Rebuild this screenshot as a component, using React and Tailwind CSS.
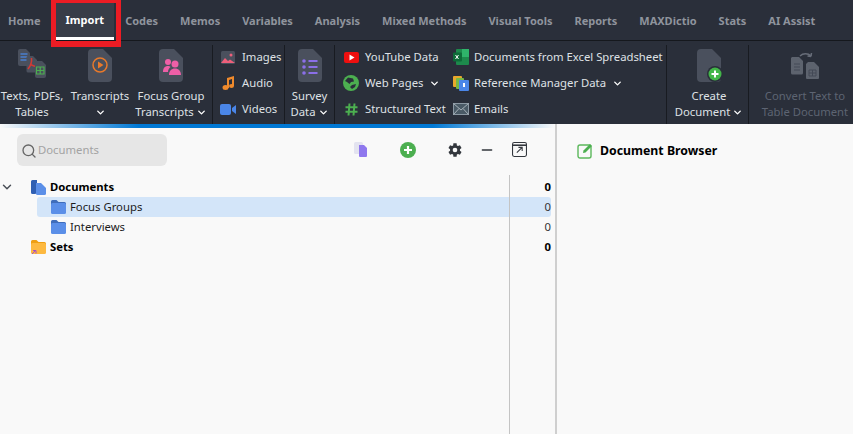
import React from 'react';
import { ChevronDown, Search, Minus } from 'lucide-react';

const tabs = ['Home', 'Import', 'Codes', 'Memos', 'Variables', 'Analysis', 'Mixed Methods', 'Visual Tools', 'Reports', 'MAXDictio', 'Stats', 'AI Assist'];

// Dark page shape used by the big ribbon buttons
const DocShape = ({ children, fill = '#4a505d' }) => (
  <svg width="24" height="33" viewBox="0 0 24 33">
    <path d="M4 0h11l9 9v20a4 4 0 0 1-4 4H4a4 4 0 0 1-4-4V4a4 4 0 0 1 4-4z" fill={fill} />
    {children}
  </svg>
);

const TextsIcon = () => (
  <svg width="28" height="29" viewBox="0 0 28 29">
    <path d="M2 0h6l4 4v11a2 2 0 0 1-2 2H2a2 2 0 0 1-2-2V2a2 2 0 0 1 2-2z" fill="#4a505d" />
    <path d="M2.500 5h7M2.500 8h7M2.500 11h7" stroke="#4a7fd0" strokeWidth="1.300" />
    <path d="M10 7h5l4 4v11a1.500 1.500 0 0 1-1.500 1.500H10A1.500 1.500 0 0 1 8.500 22V8.500A1.500 1.500 0 0 1 10 7z" fill="#4a505d" />
    <path d="M13.500 9c.5 4-1 8-3.500 11M12.500 15.500c2 1 4 2 6 2" stroke="#d23a35" strokeWidth="1.500" fill="none" />
    <path d="M19 12h5l4 4v11a2 2 0 0 1-2 2h-7a2 2 0 0 1-2-2V14a2 2 0 0 1 2-2z" fill="#4a505d" />
    <path d="M18.500 18h7.500v7h-7.500zM18.500 21.500h7.500M22.200 18v7" stroke="#4caf50" strokeWidth="1.200" fill="none" />
  </svg>
);

const BigButton = ({ icon, lines, width, disabled, chevron }) => (
  <div className={`flex flex-col items-center shrink-0 pt-[5px] ${width} ${disabled ? 'text-[#5d6472]' : 'text-[#dfe1e5]'}`}>
    <div className="h-[37px] flex items-start justify-center">{icon}</div>
    <div className="mt-[2px] text-center text-[11.3px] leading-[16px] whitespace-nowrap">
      <div>{lines[0]}</div>
      <div className="flex items-center justify-center h-[16px]">
        {lines[1]}
        {chevron && <ChevronDown size={11} strokeWidth={3} className="ml-[2px] text-white" />}
      </div>
    </div>
  </div>
);

const SmallItem = ({ icon, label, chevron, labelGap = 'w-[20px]' }) => (
  <div className="flex items-center h-[26px] text-[11.3px] text-[#dfe1e5] whitespace-nowrap">
    <div className={`${labelGap} flex items-center justify-center shrink-0`}>{icon}</div>
    <span className="ml-[4px]">{label}</span>
    {chevron && <ChevronDown size={11} strokeWidth={3} className="ml-[6px] text-white" />}
  </div>
);

const Sep = () => <div className="w-px self-stretch mt-[1px] bg-[#181b21] shrink-0" />;

const FolderIcon = ({ color = '#5b8fe8', top = '#3f6dbb' }) => (
  <svg width="15" height="14" viewBox="0 0 15 14">
    <path d="M1.500 0h4l2 2h6A1.500 1.500 0 0 1 15 3.500V6H0V1.500A1.500 1.500 0 0 1 1.500 0z" fill={top} />
    <rect x="0" y="3" width="15" height="11" rx="1.500" fill={color} />
  </svg>
);

const TreeRow = ({ icon, label, count, bold, selected, indent }) => (
  <div className={`flex items-center h-[20px] text-[11.3px] text-[#1c1c1c] ${selected ? 'bg-[#d3e5f9] rounded-[3px]' : ''} ${indent ? 'ml-[37px] pl-[13px]' : 'ml-[30px]'} mr-[4px]`}>
    <div className="w-[16px] flex justify-center shrink-0">{icon}</div>
    <span className={`ml-[4px] flex-1 ${bold ? 'font-bold text-black' : ''}`}>{label}</span>
    <span className={bold ? 'font-bold text-black' : 'text-[#333]'}>{count}</span>
  </div>
);

export default function App() {
  return (
    <div className="w-[853px] h-[434px] overflow-hidden flex flex-col bg-[#f9f9f9] font-['Noto_Sans','Open_Sans',sans-serif]">
      {/* tab bar */}
      <div className="h-[41px] shrink-0 bg-[#2a2f3a] border-b border-[#15181d] flex pt-[3px] text-[11px] font-bold text-[#8f949d]">
        {tabs.map((t) => (
          <div key={t} className={`relative flex items-center whitespace-nowrap ${t === 'Home' ? 'pl-[8px] pr-[15px]' : t === 'Import' ? 'px-[10px] text-white bg-[#383d48] border-b-[3px] border-white' : 'px-[11px]'}`}>
            {t}
            {t === 'Import' && <div className="absolute -left-[5px] -right-[7px] -top-[3px] h-[47px] border-x-[5px] border-t-[3px] border-b-[6px] border-[#ec1c24]" />}
          </div>
        ))}
      </div>

      {/* ribbon */}
      <div className="h-[83px] shrink-0 bg-[#2a2f3a] flex pt-[3px]">
        <BigButton width="w-[64px]" lines={['Texts, PDFs,', 'Tables']} icon={<TextsIcon />} />
        <BigButton width="w-[72px]" lines={['Transcripts', '']} chevron icon={
          <DocShape>
            <circle cx="12" cy="16" r="7" fill="none" stroke="#e8792b" strokeWidth="1.500" />
            <path d="M10 12.500v7l5.500-3.500z" fill="#e8792b" />
          </DocShape>
        } />
        <BigButton width="w-[70px] mr-[6px]" lines={['Focus Group', 'Transcripts']} chevron icon={
          <DocShape>
            <circle cx="9" cy="13" r="3" fill="#ee5fa7" />
            <circle cx="16" cy="15" r="3.500" fill="#ee5fa7" />
            <path d="M4 23c0-4 2-6 5-6 1 0 2 .3 2.500 1-1.500 1-2.500 3-2.500 5zM10 26c0-4 2.500-6.500 6-6.500s6 2.500 6 6.500z" fill="#ee5fa7" />
          </DocShape>
        } />
        <Sep />
        <div className="w-[71px] shrink-0 pl-[5px] flex flex-col">
          <SmallItem label="Images" icon={
            <svg width="14" height="13" viewBox="0 0 14 13"><rect width="14" height="13" rx="1.500" fill="#4a505d" /><circle cx="10" cy="4" r="1.500" fill="#ee5f7a" /><path d="M0 12l4-5 3 3 2-1.500 5 3.500v0H0z" fill="#ee5f7a" /></svg>
          } />
          <SmallItem label="Audio" icon={
            <svg width="13" height="14" viewBox="0 0 13 14"><path d="M5 2l7-2v10h-2V3L7 4v8H5z" fill="#ef8a2c" /><ellipse cx="3.500" cy="11.500" rx="3" ry="2.500" fill="#ef8a2c" /><ellipse cx="9.500" cy="10" rx="2.500" ry="2" fill="#ef8a2c" /></svg>
          } />
          <SmallItem label="Videos" icon={
            <svg width="16" height="11" viewBox="0 0 16 11"><rect width="11" height="11" rx="2" fill="#4a86e8" /><path d="M12 4l4-3v9l-4-3z" fill="#4a86e8" /></svg>
          } />
        </div>
        <Sep />
        <BigButton width="w-[49px]" lines={['Survey', 'Data']} chevron icon={
          <DocShape>
            <g fill="#8b6fe8"><circle cx="6" cy="12" r="1.800" /><circle cx="6" cy="18" r="1.800" /><circle cx="6" cy="24" r="1.800" /></g>
            <path d="M10.500 12h9M10.500 18h9M10.500 24h9" stroke="#8b6fe8" strokeWidth="1.800" />
          </DocShape>
        } />
        <Sep />
        <div className="w-[117px] shrink-0 pl-[6px] flex flex-col">
          <SmallItem label="YouTube Data" icon={
            <svg width="15" height="11" viewBox="0 0 15 11"><rect width="15" height="11" rx="2" fill="#ee0f0f" /><path d="M5.500 2.500v6l5-3z" fill="#fff" /></svg>
          } />
          <SmallItem label="Web Pages" chevron icon={
            <svg width="16" height="16" viewBox="0 0 16 16"><circle cx="8" cy="8" r="8" fill="#4caf50" /><path d="M5 2.500l5 1 1 3-3 .5-1.500 2-2.500-2-2-1zM7 12l2-2 4-1-1 3-3 2z" fill="#2a2f3a" /></svg>
          } />
          <SmallItem label="Structured Text" icon={
            <svg width="13" height="13" viewBox="0 0 13 13" stroke="#4caf50" strokeWidth="2"><path d="M4.500 0.500l-1 12M9.500 0.500l-1 12M0.500 4.200h12M0.500 8.800h12" /></svg>
          } />
        </div>
        <div className="w-[214px] shrink-0 flex flex-col">
          <SmallItem label="Documents from Excel Spreadsheet" labelGap="w-[18px]" icon={
            <svg width="16" height="16" viewBox="0 0 16 16"><rect x="3" width="13" height="16" rx="1" fill="#1d8a4c" /><rect x="9" y="0" width="7" height="8" fill="#2fb36a" /><rect y="3.500" width="9" height="9" rx="1" fill="#0e6b38" /><path d="M2.500 6l3 4M5.500 6l-3 4" stroke="#fff" strokeWidth="1" /></svg>
          } />
          <SmallItem label="Reference Manager Data" labelGap="w-[18px]" chevron icon={
            <svg width="16" height="15" viewBox="0 0 16 15"><rect width="9" height="11" rx="1" fill="#e8a92c" /><rect x="3" y="2" width="8" height="11" rx="1" fill="#76b947" /><rect x="6" y="4" width="10" height="11" rx="1" fill="#4a86e8" /><rect x="10" y="7" width="2" height="4" fill="#fff" /></svg>
          } />
          <SmallItem label="Emails" labelGap="w-[18px]" icon={
            <svg width="16" height="12" viewBox="0 0 16 12"><rect x=".5" y=".5" width="15" height="11" fill="#4a5a66" stroke="#8b98a3" /><path d="M.5.500L8 7l7.500-6.500M.5 11.500L6 5.500M15.500 11.500L10 5.500" stroke="#a6b0b8" fill="none" /></svg>
          } />
        </div>
        <Sep />
        <BigButton width="w-[81px] pl-[3px]" lines={['Create', 'Document']} chevron icon={
          <svg width="30" height="33" viewBox="0 0 30 33" className="ml-[6px]">
            <path d="M4 0h11l9 9v20a4 4 0 0 1-4 4H4a4 4 0 0 1-4-4V4a4 4 0 0 1 4-4z" fill="#4a505d" />
            <circle cx="18" cy="25" r="8" fill="#2a2f3a" />
            <circle cx="18" cy="25" r="6.500" fill="#43b649" />
            <path d="M18 21.500v7M14.500 25h7" stroke="#fff" strokeWidth="2" />
          </svg>
        } />
        <Sep />
        <BigButton width="w-[102px] pl-[10px]" disabled lines={['Convert Text to', 'Table Document']} icon={
          <svg width="30" height="33" viewBox="0 0 30 33" className="opacity-80">
            <path d="M10 7c3-3 8-3 11 0M21 7.500l-3.500-.5M21 7.500l.5-3.500" stroke="#777d89" strokeWidth="1.500" fill="none" />
            <path d="M2 8h7l4 4v12a1.500 1.500 0 0 1-1.500 1.500h-9A1.500 1.500 0 0 1 1 24V9z" fill="#6a707c" />
            <path d="M4 15h6M4 18h6M4 21h6" stroke="#4a505d" />
            <path d="M18 13h6l5 5v11a1 1 0 0 1-1 1H17a1 1 0 0 1-1-1V15z" fill="#6a707c" />
            <path d="M19 21h7v6h-7zM19 24h7M22.500 21v6" stroke="#4a505d" fill="none" />
          </svg>
        } />
      </div>

      {/* loading gradient */}
      <div className="h-[4px] shrink-0 flex">
        <div className="w-[555px] bg-[linear-gradient(to_right,#f9f9f9_0%,#0078d4_25%,#0078d4_78%,#f9f9f9_100%)]" />
      </div>

      {/* panels */}
      <div className="flex-1 flex min-h-0">
        <div className="relative w-[555px] shrink-0 flex flex-col">
          <div className="h-[49px] shrink-0 flex items-start pt-[6px]">
            <div className="ml-[17px] w-[150px] h-[32px] rounded-[6px] bg-[#e6e6e6] flex items-center pl-[4px] pt-[1px] text-[11.3px] text-[#a3a3a3]">
              <Search size={16} className="text-[#666]" />
              <span className="ml-[1px]">Documents</span>
            </div>
            <div className="ml-[186px] mt-[8px] w-[16px] flex justify-center">
              <svg width="14" height="15" viewBox="0 0 14 15"><rect width="9" height="12" rx="1.500" fill="#e3e3f0" /><path d="M5 3h5l3 3v8a1 1 0 0 1-1 1H6a1 1 0 0 1-1-1z" fill="#8f78ee" /></svg>
            </div>
            <div className="ml-[31px] mt-[8px]">
              <svg width="16" height="16" viewBox="0 0 16 16"><circle cx="8" cy="8" r="8" fill="#4caf50" /><path d="M8 4v8M4 8h8" stroke="#fff" strokeWidth="2.200" /></svg>
            </div>
            <div className="ml-[31px] mt-[8px]">
              <svg width="16" height="16" viewBox="0 0 24 24" fill="#33373d"><path d="M19.400 13a7.500 7.500 0 0 0 0-2l2.400-1.900-2.400-4.200-2.900 1.200a7.500 7.500 0 0 0-1.700-1L14.400 2H9.600l-.4 3.100a7.500 7.500 0 0 0-1.700 1L4.600 4.900 2.200 9.100 4.600 11a7.500 7.500 0 0 0 0 2l-2.400 1.900 2.400 4.200 2.900-1.200a7.500 7.500 0 0 0 1.700 1l.4 3.100h4.800l.4-3.100a7.500 7.500 0 0 0 1.700-1l2.900 1.200 2.400-4.200zM12 15.500a3.500 3.500 0 1 1 0-7 3.500 3.500 0 0 1 0 7z" /></svg>
            </div>
            <Minus size={16} strokeWidth={2} className="ml-[16px] mt-[8px] text-[#33373d]" />
            <div className="ml-[17px] mt-[8px]">
              <svg width="15" height="15" viewBox="0 0 14 14" fill="none" stroke="#33373d"><rect x=".5" y=".5" width="13" height="13" rx="1.500" /><path d="M.5 3h13" strokeWidth="1.500" /><path d="M4.500 10L9.500 5M6 5h3.500v3.500" /></svg>
            </div>
          </div>

          <TreeRow bold label="Documents" count="0" icon={
            <svg width="15" height="15" viewBox="0 0 15 15"><path d="M1.500 0H6v12a2 2 0 0 1-2 2H1.500A1.500 1.500 0 0 1 0 12.500v-11A1.500 1.500 0 0 1 1.500 0z" fill="#2f5fb3" /><path d="M5 3h5l5 5v5.500a1.500 1.500 0 0 1-1.500 1.500h-7A1.500 1.500 0 0 1 5 13.500z" fill="#5b8fe8" /></svg>
          } />
          <TreeRow selected indent label="Focus Groups" count="0" icon={<FolderIcon />} />
          <TreeRow indent label="Interviews" count="0" icon={<FolderIcon />} />
          <TreeRow bold label="Sets" count="0" icon={
            <svg width="15" height="15" viewBox="0 0 15 15"><path d="M1.500 0h4l2 2h6A1.500 1.500 0 0 1 15 3.500V6H0V1.500A1.500 1.500 0 0 1 1.500 0z" fill="#ef9f12" /><rect y="3" width="15" height="11" rx="1.500" fill="#fdb940" /><path d="M1 14l3.500-3.500M2 10.500h3v3" stroke="#a24bd0" strokeWidth="1" fill="none" /></svg>
          } />

          <ChevronDown size={14} strokeWidth={2.500} className="absolute left-0 top-[52px] text-[#4a4f57]" />
          <div className="absolute left-[509px] top-[47px] bottom-0 w-px bg-[#c4c4c4]" />
        </div>
        <div className="w-[2px] bg-[#cfcfcf] shrink-0 -mt-[4px]" />
        <div className="flex-1 pl-[20px] pt-[14px]">
          <div className="flex items-center gap-[7px] text-[12.300px] font-bold text-black">
            <svg width="16" height="16" viewBox="0 0 16 16" fill="none"><rect x="1" y="2" width="13" height="13" rx="2" stroke="#5cb85c" strokeWidth="1.400" /><path d="M6 10l.5-2.500L13 1l2 2-6.500 6.500z" fill="#4caf50" /></svg>
            <span>Document Browser</span>
          </div>
        </div>
      </div>
    </div>
  );
}
